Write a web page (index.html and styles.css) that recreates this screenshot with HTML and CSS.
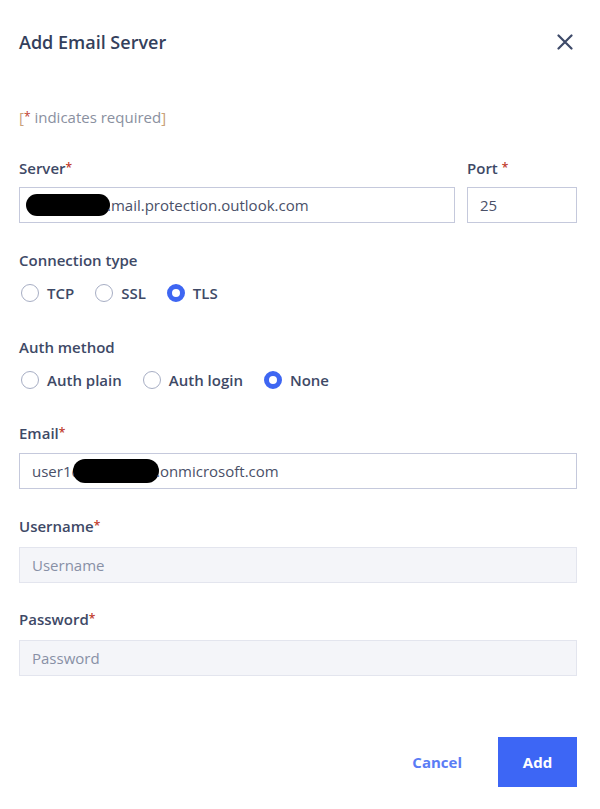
FILE: index.html
```html
<!DOCTYPE html>
<html>
<head>
<meta charset="utf-8">
<link rel="stylesheet" href="styles.css">
</head>
<body>
<div class="dialog">
  <div class="header">
    <div class="title">Add Email Server</div>
    <div class="close">
      <svg width="16" height="16" viewBox="0 0 16 16"><path d="M1.5 1.5 L14.5 14.5 M14.5 1.5 L1.5 14.5" stroke="#3e4a69" stroke-width="2.2" stroke-linecap="round"/></svg>
    </div>
  </div>
  <div class="required"><span class="br">[</span><span class="star">*</span> indicates required<span class="br">]</span></div>

  <div class="row">
    <div class="field grow">
      <div class="label">Server<span class="star">*</span></div>
      <div class="input"><span class="redact r1"></span>.mail.protection.outlook.com</div>
    </div>
    <div class="field port">
      <div class="label">Port <span class="star">*</span></div>
      <div class="input">25</div>
    </div>
  </div>

  <div class="group first">
    <div class="label">Connection type</div>
    <div class="radios">
      <div class="radio"><span class="circle"></span>TCP</div>
      <div class="radio"><span class="circle"></span>SSL</div>
      <div class="radio"><span class="circle on"></span>TLS</div>
    </div>
  </div>

  <div class="group">
    <div class="label">Auth method</div>
    <div class="radios">
      <div class="radio"><span class="circle"></span>Auth plain</div>
      <div class="radio"><span class="circle"></span>Auth login</div>
      <div class="radio"><span class="circle on"></span>None</div>
    </div>
  </div>

  <div class="field email">
    <div class="label">Email<span class="star">*</span></div>
    <div class="input">user1@<span class="redact r2"></span>.onmicrosoft.com</div>
  </div>

  <div class="field next">
    <div class="label">Username<span class="star">*</span></div>
    <div class="input disabled">Username</div>
  </div>

  <div class="field next last">
    <div class="label">Password<span class="star">*</span></div>
    <div class="input disabled">Password</div>
  </div>

  <div class="footer">
    <div class="cancel">Cancel</div>
    <div class="add">Add</div>
  </div>
</div>
</body>
</html>
```
FILE: styles.css
```css
html, body {
  margin: 0;
  padding: 0;
  background: #ffffff;
}
body {
  font-family: "Open Sans", "Liberation Sans", sans-serif;
  color: #3b4663;
}
.dialog {
  width: 600px;
  box-sizing: border-box;
  padding: 32px 23px 0 19px;
}
.header {
  display: flex;
  justify-content: space-between;
  align-items: center;
  height: 20px;
}
.title {
  font-size: 18px;
  font-weight: 600;
  line-height: 20px;
  color: #343f5c;
}
.close {
  width: 16px;
  height: 16px;
  margin-right: 4px;
  display: flex;
}
.required {
  margin-top: 57px;
  font-size: 15px;
  line-height: 16px;
  color: #8a90a0;
}
.required .br { color: #c9a27a; }
.star { color: #c0392b; font-size: 12px; position: relative; top: -2px; line-height: 0; }
.row {
  display: flex;
  gap: 12px;
  margin-top: 34px;
}
.grow { flex: 1; }
.port { width: 110px; }
.label {
  font-size: 15px;
  font-weight: 600;
  line-height: 18px;
  height: 18px;
  color: #3e4966;
}
.input {
  margin-top: 10px;
  height: 36px;
  box-sizing: border-box;
  border: 1.5px solid #c5c9dc;
  padding: 0 12px 0 6px;
  display: flex;
  align-items: center;
  font-size: 15px;
  color: #4a5068;
  white-space: nowrap;
}
.port .input { padding-left: 12px; }
.email .input { padding-left: 12px; }
.redact {
  display: inline-block;
  background: #000;
  border-radius: 12px;
  height: 22px;
}
.r1 { width: 84px; margin-right: -3px; }
.r2 { width: 86px; margin-left: -12px; margin-right: -3px; height: 24px; }
.group { margin-top: 35px; }
.group.first { margin-top: 28px; }
.radios {
  display: flex;
  gap: 19px;
  margin-top: 14px;
  height: 20px;
}
.radio {
  display: flex;
  align-items: center;
  font-size: 15px;
  font-weight: 600;
  color: #3e4966;
  padding-left: 2px;
}
.circle {
  width: 18px;
  height: 18px;
  box-sizing: border-box;
  border: 1.5px solid #a7aec4;
  border-radius: 50%;
  margin-right: 8px;
}
.circle.on {
  border: 5px solid #3e66f2;
  background: #fff;
}
.email { margin-top: 34px; }
.email .input { margin-top: 11px; }
.next { margin-top: 28px; }
.next.last { margin-top: 27px; }
.next .input { margin-top: 12px; }
.input.disabled {
  background: #f4f5f9;
  border-color: #e3e5ee;
  color: #8890a6;
  padding-left: 12px;
}
.footer {
  display: flex;
  justify-content: flex-end;
  align-items: center;
  margin-top: 61px;
  gap: 36px;
}
.cancel {
  font-size: 15px;
  font-weight: 700;
  color: #5a7cf5;
}
.add {
  width: 79px;
  height: 50px;
  background: #3d66f5;
  color: #fff;
  font-size: 15px;
  font-weight: 700;
  display: flex;
  align-items: center;
  justify-content: center;
}
```
